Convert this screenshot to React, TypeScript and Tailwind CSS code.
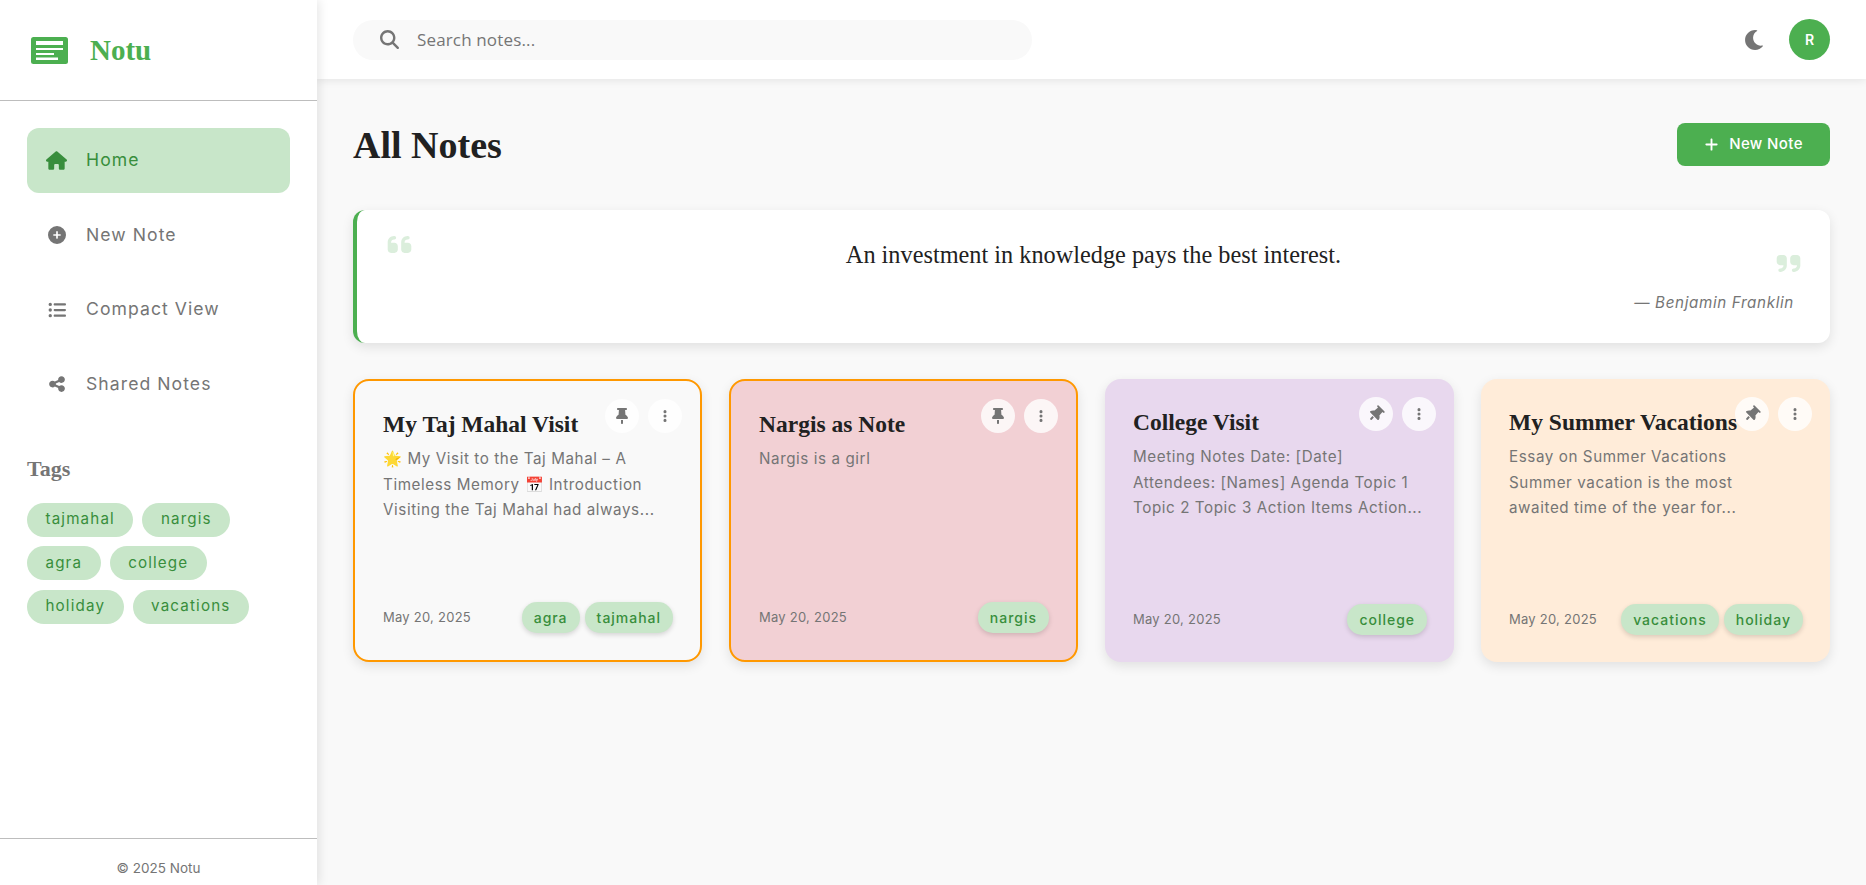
import React from "react";
import { FaMoon } from "react-icons/fa";
import {
  FaCirclePlus,
  FaEllipsisVertical,
  FaHouse,
  FaListUl,
  FaMagnifyingGlass,
  FaPlus,
  FaQuoteLeft,
  FaQuoteRight,
  FaShareNodes,
  FaThumbtack,
} from "react-icons/fa6";

const navItems = [
  { label: "Home", icon: <FaHouse size={21} />, active: true },
  { label: "New Note", icon: <FaCirclePlus size={18} />, active: false },
  { label: "Compact View", icon: <FaListUl size={18} />, active: false },
  { label: "Shared Notes", icon: <FaShareNodes size={18} />, active: false },
];

const sidebarTags = [
  ["tajmahal", "nargis"],
  ["agra", "college"],
  ["holiday", "vacations"],
];

const notes = [
  {
    title: "My Taj Mahal Visit",
    lines: ["🌟 My Visit to the Taj Mahal – A", "Timeless Memory 📅 Introduction", "Visiting the Taj Mahal had always..."],
    tags: ["agra", "tajmahal"],
    pinned: true,
    color: "bg-[#f9f9f9] border-2 border-[#ff9800]",
  },
  {
    title: "Nargis as Note",
    lines: ["Nargis is a girl"],
    tags: ["nargis"],
    pinned: true,
    color: "bg-[#f2d0d4] border-2 border-[#ff9800]",
  },
  {
    title: "College Visit",
    lines: ["Meeting Notes Date: [Date]", "Attendees: [Names] Agenda Topic 1", "Topic 2 Topic 3 Action Items Action..."],
    tags: ["college"],
    pinned: false,
    color: "bg-[#e8d8ee]",
  },
  {
    title: "My Summer Vacations",
    lines: ["Essay on Summer Vacations", "Summer vacation is the most", "awaited time of the year for..."],
    tags: ["vacations", "holiday"],
    pinned: false,
    color: "bg-[#ffecd9]",
  },
];

const Logo = () => (
  <svg width="37" height="27" viewBox="0 0 37 27">
    <rect width="37" height="27" rx="2.5" fill="#4caf50" />
    <rect x="5" y="4" width="27" height="4" fill="#fff" />
    <rect x="5" y="11" width="27" height="2" fill="#fff" />
    <rect x="5" y="16" width="18" height="2" fill="#fff" />
    <rect x="5" y="20.5" width="22" height="2.5" fill="#fff" />
  </svg>
);

const NoteCard = ({ note }: { note: (typeof notes)[number] }) => (
  <div className={`relative h-[283px] rounded-2xl flex flex-col pl-[28px] pr-[27px] pt-[28px] pb-[27px] shadow-[0_4px_12px_rgba(0,0,0,0.1)] ${note.color}`}>
    <div className="absolute top-[18px] right-[18px] flex gap-[9px]">
      <button className="w-[34px] h-[34px] rounded-full bg-white/80 flex items-center justify-center text-[#757575]">
        <FaThumbtack size={16} className={note.pinned ? "" : "rotate-45"} />
      </button>
      <button className="w-[34px] h-[34px] rounded-full bg-white/80 flex items-center justify-center text-[#757575]">
        <FaEllipsisVertical size={14} />
      </button>
    </div>
    <h3 className="font-['Liberation_Serif',serif] font-bold text-[23.5px] leading-[30px] mb-[7px] text-[#212121] whitespace-nowrap">
      {note.title}
    </h3>
    <div className="text-[15.2px] tracking-[0.58px] leading-[25.6px] text-[#757575] whitespace-nowrap">
      {note.lines.map((l) => (
        <p key={l}>{l}</p>
      ))}
    </div>
    <div className="mt-auto flex items-center justify-between">
      <span className="text-[13px] tracking-[0.25px] text-[#757575]">May 20, 2025</span>
      <div className="flex gap-[5px]">
        {note.tags.map((t) => (
          <span
            key={t}
            className="h-[31px] px-[12px] rounded-[15px] bg-[#c8e6c9] text-[#388e3c] text-[14px] tracking-[0.07em] font-medium flex items-center shadow-[0_2px_5px_rgba(0,0,0,0.15)]"
          >
            {t}
          </span>
        ))}
      </div>
    </div>
  </div>
);

export default function App() {
  return (
    <div className="h-screen flex bg-[#f9f9f9] overflow-hidden font-['Inter',sans-serif]">
      <aside className="relative z-20 w-[317px] shrink-0 bg-white flex flex-col shadow-[2px_0_10px_rgba(0,0,0,0.1)]">
        <div className="h-[101px] shrink-0 border-b border-[#bdbdbd] flex items-center pl-[31px] gap-[22px]">
          <Logo />
          <span className="pt-[2px] font-['Liberation_Serif',serif] font-bold text-[29px] text-[#4caf50]">Notu</span>
        </div>
        <nav className="flex flex-col gap-[9.5px] px-[27px] pt-[27px]">
          {navItems.map((item) => (
            <a
              key={item.label}
              className={`h-[65px] rounded-xl flex items-center text-[17.6px] tracking-[0.06em] ${
                item.active ? "bg-[#c8e6c9] text-[#388e3c]" : "text-[#757575]"
              }`}
            >
              <span className="w-[60px] pr-[1px] flex justify-center">{item.icon}</span>
              <span className="-ml-[1px]">{item.label}</span>
            </a>
          ))}
        </nav>
        <div className="px-[27px] mt-[38px]">
          <h4 className="font-['Liberation_Serif',serif] font-bold text-[22px] text-[#757575] leading-[28px] mb-[20px]">Tags</h4>
          <div className="flex flex-col gap-[9.5px]">
            {sidebarTags.map((row, i) => (
              <div key={i} className="flex gap-[9px]">
                {row.map((t) => (
                  <span key={t} className="h-[34px] px-[18.5px] rounded-[17px] bg-[#c8e6c9] text-[#388e3c] text-[15.2px] tracking-[0.075em] flex items-center">
                    {t}
                  </span>
                ))}
              </div>
            ))}
          </div>
        </div>
        <div className="mt-auto h-[47px] shrink-0 border-t border-[#bdbdbd] pt-[12px] flex items-center justify-center text-[13.5px] text-[#757575]">
          © 2025 Notu
        </div>
      </aside>

      <div className="flex-1 min-w-0 flex flex-col">
        <header className="relative z-10 h-[79px] shrink-0 bg-white flex items-center justify-between px-[36px] shadow-[0_2px_8px_rgba(0,0,0,0.08)]">
          <div className="w-[679px] h-[40px] rounded-full bg-[#f9f9f9] flex items-center pl-[27px] gap-[18px] text-[#757575]">
            <FaMagnifyingGlass size={19} />
            <input
              placeholder="Search notes..."
              className="flex-1 bg-transparent outline-none text-[17px] tracking-[0.15px] font-['Open_Sans',sans-serif] placeholder:text-[#757575]"
            />
          </div>
          <div className="flex items-center gap-[25px]">
            <FaMoon size={20} className="text-[#757575]" />
            <div className="w-[41px] h-[41px] rounded-full bg-[#4caf50] text-white text-[14px] font-semibold flex items-center justify-center">
              R
            </div>
          </div>
        </header>

        <main className="flex-1 px-[36px] pt-[44px]">
          <div className="flex items-center justify-between h-[43px] mb-[44px]">
            <h1 className="pt-[2px] font-['Liberation_Serif',serif] font-bold text-[38px] text-[#212121]">All Notes</h1>
            <button className="w-[153px] h-[43px] rounded-lg bg-[#4caf50] text-white text-[15px] tracking-[0.4px] font-medium flex items-center justify-center gap-[10px]">
              <FaPlus size={15} />
              New Note
            </button>
          </div>

          <section className="relative h-[133px] rounded-xl bg-white border-l-4 border-[#4caf50] mb-[36px] pt-[29px] pr-[36px] shadow-[0_4px_12px_rgba(0,0,0,0.1)]">
            <FaQuoteLeft size={27} className="absolute left-[29px] top-[21px] text-[#dbeedc]" />
            <FaQuoteRight size={27} className="absolute right-[28px] top-[40px] text-[#dbeedc]" />
            <p className="font-['Liberation_Serif',serif] text-[24.3px] leading-[32px] text-[#212121] text-center pl-[36px]">
              An investment in knowledge pays the best interest.
            </p>
            <p className="mt-[21px] text-right italic text-[15.2px] tracking-[0.65px] text-[#757575]">— Benjamin Franklin</p>
          </section>

          <div className="grid grid-cols-4 gap-[27px]">
            {notes.map((n) => (
              <NoteCard key={n.title} note={n} />
            ))}
          </div>
        </main>
      </div>
    </div>
  );
}
